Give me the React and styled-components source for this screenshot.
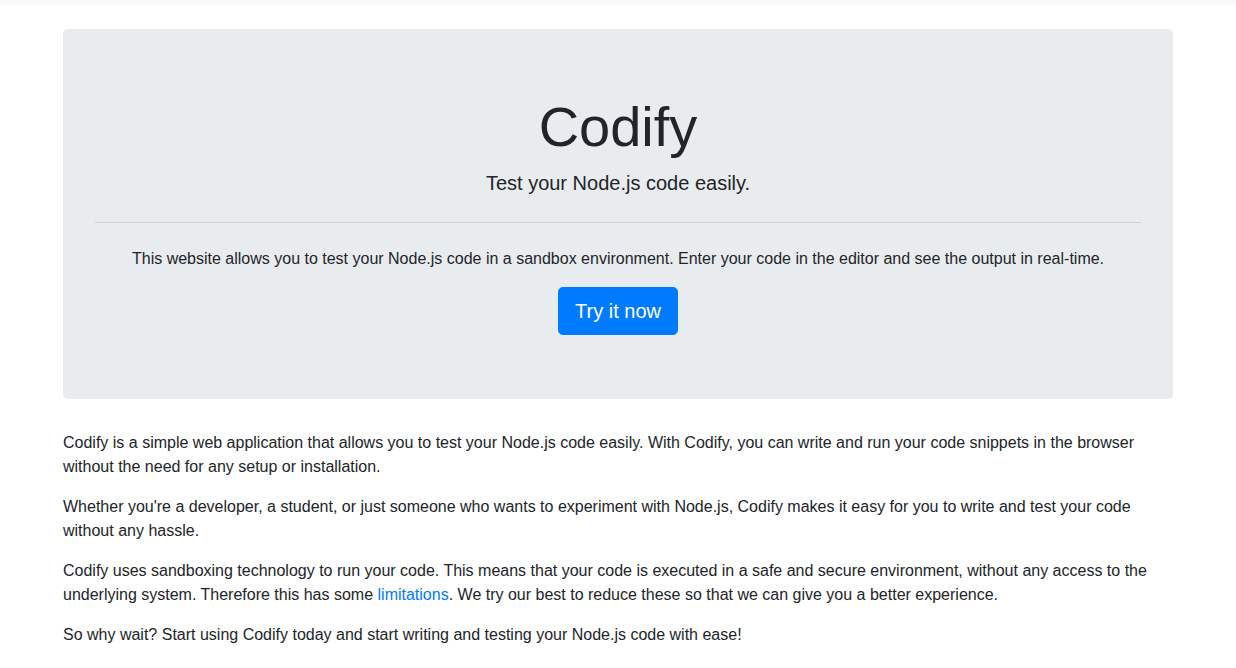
import React from "react";
import styled, { createGlobalStyle } from "styled-components";

const GlobalStyle = createGlobalStyle`
  body {
    margin: 0;
    font-family: "Helvetica Neue", Arial, "Liberation Sans", sans-serif;
    font-size: 16px;
    line-height: 1.5;
    color: #212529;
    background: #fff;
  }
`;

const TopBar = styled.div`
  height: 5px;
  background: #f8f9fa;
`;

const Container = styled.div`
  max-width: 1110px;
  margin: 0 auto;
  padding: 24px 15px 0;
`;

const Jumbotron = styled.div`
  background: #e9ecef;
  border-radius: 4.8px;
  padding: 64px 32px;
  margin-bottom: 32px;
  text-align: center;
`;

const Title = styled.h1`
  font-size: 56px;
  font-weight: 300;
  line-height: 1.2;
  margin: 0 0 8px;
`;

const Lead = styled.p`
  font-size: 20px;
  line-height: 1.5;
  margin: 0 0 16px;
`;

const Divider = styled.hr`
  border: 0;
  border-top: 1px solid rgba(0, 0, 0, 0.1);
  margin: 24px 0;
`;

const Text = styled.p`
  margin: 0 0 16px;
`;

const Button = styled.a`
  display: inline-block;
  background: #007bff;
  border: 1px solid #007bff;
  color: #fff;
  font-size: 20px;
  line-height: 1.5;
  padding: 8px 16px;
  border-radius: 4.8px;
  text-decoration: none;
`;

const Link = styled.a`
  color: #007bff;
  text-decoration: none;
`;

export default function App() {
  return (
    <>
      <GlobalStyle />
      <TopBar />
      <Container>
        <Jumbotron>
          <Title>Codify</Title>
          <Lead>Test your Node.js code easily.</Lead>
          <Divider />
          <Text>
            This website allows you to test your Node.js code in a sandbox
            environment. Enter your code in the editor and see the output in
            real-time.
          </Text>
          <Button href="#">Try it now</Button>
        </Jumbotron>
        <Text>
          Codify is a simple web application that allows you to test your
          Node.js code easily. With Codify, you can write and run your code
          snippets in the browser without the need for any setup or
          installation.
        </Text>
        <Text>
          Whether you're a developer, a student, or just someone who wants to
          experiment with Node.js, Codify makes it easy for you to write and
          test your code without any hassle.
        </Text>
        <Text>
          Codify uses sandboxing technology to run your code. This means that
          your code is executed in a safe and secure environment, without any
          access to the underlying system. Therefore this has some{" "}
          <Link href="#">limitations</Link>. We try our best to reduce these so
          that we can give you a better experience.
        </Text>
        <Text>
          So why wait? Start using Codify today and start writing and testing
          your Node.js code with ease!
        </Text>
      </Container>
    </>
  );
}
